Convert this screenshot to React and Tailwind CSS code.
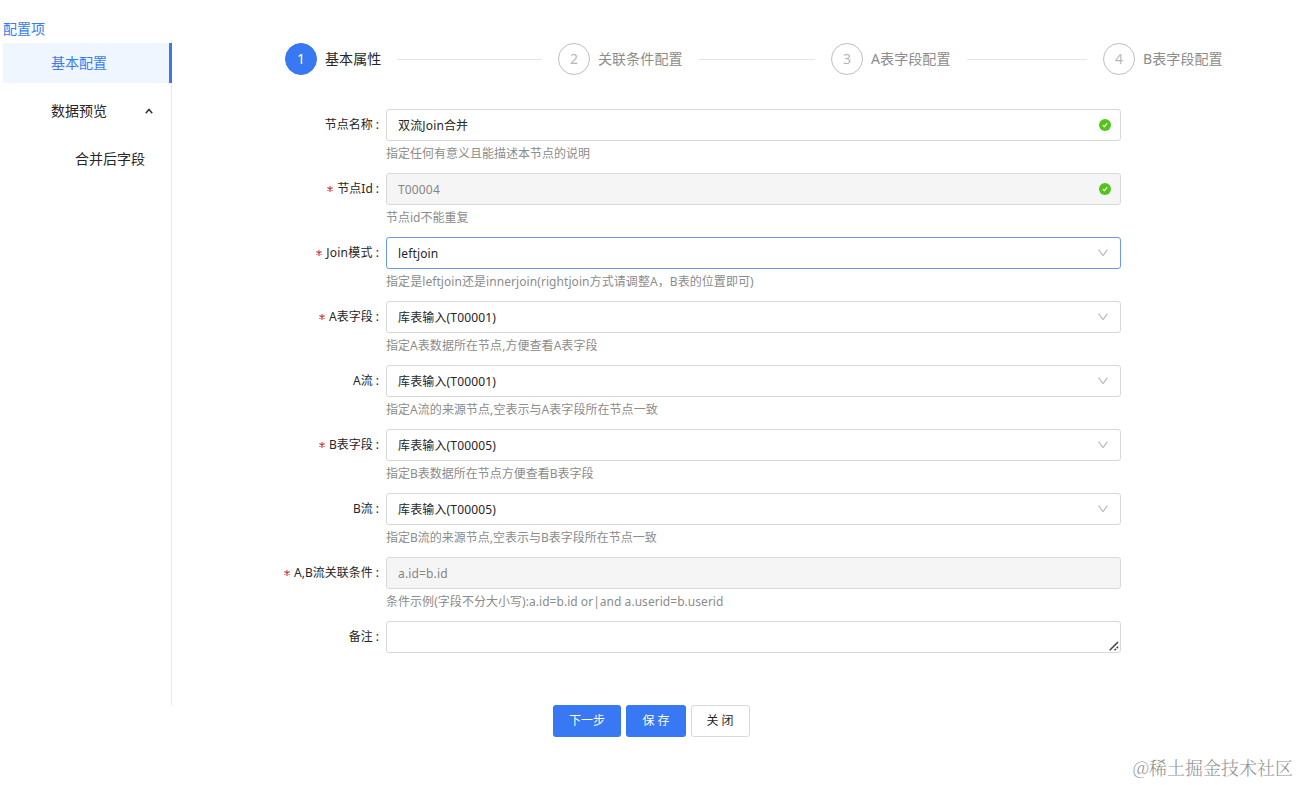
import React from "react";

const steps = [
  { title: "基本属性", width: "w-[273px]", active: true },
  { title: "关联条件配置", width: "w-[273px]" },
  { title: "A表字段配置", width: "w-[272px]" },
  { title: "B表字段配置", width: "w-[140px]" },
];

const fields = [
  { label: "节点名称", value: "双流Join合并", help: "指定任何有意义且能描述本节点的说明", icon: "check" },
  { label: "节点Id", required: true, value: "T00004", help: "节点id不能重复", icon: "check", disabled: true },
  { label: "Join模式", required: true, value: "leftjoin", help: "指定是leftjoin还是innerjoin(rightjoin方式请调整A，B表的位置即可)", icon: "arrow", focused: true, tracking: "tracking-[0.07px]", labelTracking: "tracking-[0.25px]" },
  { label: "A表字段", required: true, value: "库表输入(T00001)", help: "指定A表数据所在节点,方便查看A表字段", icon: "arrow", tracking: "tracking-[0.05px]" },
  { label: "A流", value: "库表输入(T00001)", help: "指定A流的来源节点,空表示与A表字段所在节点一致", icon: "arrow", tracking: "tracking-[0.05px]" },
  { label: "B表字段", required: true, value: "库表输入(T00005)", help: "指定B表数据所在节点方便查看B表字段", icon: "arrow" },
  { label: "B流", value: "库表输入(T00005)", help: "指定B流的来源节点,空表示与B表字段所在节点一致", icon: "arrow" },
  { label: "A,B流关联条件", required: true, value: "a.id=b.id", help: "条件示例(字段不分大小写):a.id=b.id or|and a.userid=b.userid", disabled: true, tracking: "tracking-[0.04px]" },
  { label: "备注", value: "", help: "", icon: "resize" },
];

function FieldIcon({ type }) {
  if (type === "check") {
    return (
      <svg width="12" height="12" viewBox="0 0 12 12" className="mr-[9px] shrink-0 self-center">
        <circle cx="6" cy="6" r="6" fill="#52c41a" />
        <path d="M3.8 6.1 5.4 7.7 8.2 4.3" fill="none" stroke="#fff" strokeWidth="1.1" />
      </svg>
    );
  }
  if (type === "arrow") {
    return (
      <svg width="10" height="8" viewBox="0 0 10 8" className="mr-3 shrink-0 self-center">
        <path d="M0.6 0.7 5 6.6 9.4 0.7" fill="none" stroke="#b8b8b8" strokeWidth="1.1" />
      </svg>
    );
  }
  if (type === "resize") {
    return (
      <svg width="10" height="10" viewBox="0 0 10 10" className="mr-px mb-px shrink-0 self-end">
        <path d="M0.7 9.3 9 1M5.5 9.3 6.9 7.9M7.7 7.1 9 5.8" fill="none" stroke="#444" strokeWidth="1.6" />
      </svg>
    );
  }
  return null;
}

function Asterisk() {
  return (
    <svg width="6" height="6" viewBox="0 0 6 6" className="mr-1 shrink-0">
      <path d="M3 0V6M0.4 1.5 5.6 4.5M5.6 1.5 0.4 4.5" fill="none" stroke="#d33a3a" strokeWidth="1.1" />
    </svg>
  );
}

function Field({ field }) {
  const tone = field.disabled
    ? "border-[#d9d9d9] bg-[#f5f5f5] text-[#858585]"
    : field.focused
      ? "border-[#6b9aec] bg-white text-[#262626]"
      : "border-[#d9d9d9] bg-white text-[#262626]";
  return (
    <div className="flex h-16">
      <div className="flex h-8 w-[214px] shrink-0 items-center justify-end pr-[7px] text-[12px] leading-8 text-[#262626]">
        {field.required && <Asterisk />}
        <span className={field.labelTracking || ""}>{field.label}</span>
        <span className="ml-[3px]">:</span>
      </div>
      <div className="w-[735px]">
        <div className={`flex h-8 justify-between rounded-[3px] border pl-[11px] ${tone}`}>
          <span className="text-[12px] leading-[31px] tracking-[0.15px]">{field.value}</span>
          <FieldIcon type={field.icon} />
        </div>
        <div className={`text-[12px] leading-[25px] whitespace-nowrap text-[#8c8c8c] ${field.tracking || ""}`}>{field.help}</div>
      </div>
    </div>
  );
}

export default function App() {
  return (
    <div className="flex h-[785px] w-[1299px] flex-col overflow-hidden bg-white font-['Noto_Sans','Noto_Sans_CJK_SC',sans-serif]">
      <div className="flex h-[705px]">
        <aside className="flex w-[172px] flex-col pt-[17px] pl-[3px] text-[14px]">
          <div className="h-[23px] leading-6 text-[#3d7af0]">配置项</div>
          <nav className="grow border-r border-[#e8e8e8] pt-[3px]">
            <div className="-mr-px h-10 border-r-[3px] border-[#3d78ee] bg-[#eff6ff] pl-12 leading-10 text-[#3d7af0]">基本配置</div>
            <div className="mt-2 flex h-10 items-center justify-between pr-[18px] pl-12 leading-10 text-[#262626]">
              <span>数据预览</span>
              <svg width="8" height="6" viewBox="0 0 8 6">
                <path d="M0.8 5.2 4 1.4 7.2 5.2" fill="none" stroke="#333" strokeWidth="1.5" />
              </svg>
            </div>
            <div className="mt-2 h-10 pl-[72px] leading-10 text-[#262626]">合并后字段</div>
          </nav>
        </aside>
        <main className="pt-[43px]">
          <div className="flex pl-[113px]">
            {steps.map((step, i) => (
              <div key={step.title} className={`flex h-8 shrink-0 items-center ${step.width}`}>
                <div className={`flex size-8 shrink-0 items-center justify-center rounded-full border pb-px text-[14px] ${step.active ? "border-[#3878f3] bg-[#3878f3] text-white" : "border-[#bfbfbf] text-[#b8b8b8]"}`}>
                  {i + 1}
                </div>
                <span className={`ml-2 text-[14px] leading-8 tracking-[0.1px] whitespace-nowrap ${step.active ? "text-[#262626]" : "text-[#8c8c8c]"}`}>{step.title}</span>
                {i < 3 && <div className="mx-4 h-px grow bg-[#e4e4e4]" />}
              </div>
            ))}
          </div>
          <form className="pt-[34px]">
            {fields.map((field) => (
              <Field key={field.label} field={field} />
            ))}
          </form>
        </main>
      </div>
      <div className="flex gap-[5px] pl-[553px] text-[12px]">
        <button className="h-8 w-[68px] rounded-[3px] bg-[#3878f3] text-white">下一步</button>
        <button className="h-8 w-[60px] rounded-[3px] bg-[#3878f3] text-white">保 存</button>
        <button className="h-8 w-[59px] rounded-[3px] border border-[#d9d9d9] pr-px text-[#262626]">关 闭</button>
      </div>
      <div className="mt-[16px] pr-[6px] text-right font-['Noto_Serif_CJK_SC','Noto_Sans_CJK_SC',serif] text-[18px] leading-7 font-light text-[#929292]">@稀土掘金技术社区</div>
    </div>
  );
}
